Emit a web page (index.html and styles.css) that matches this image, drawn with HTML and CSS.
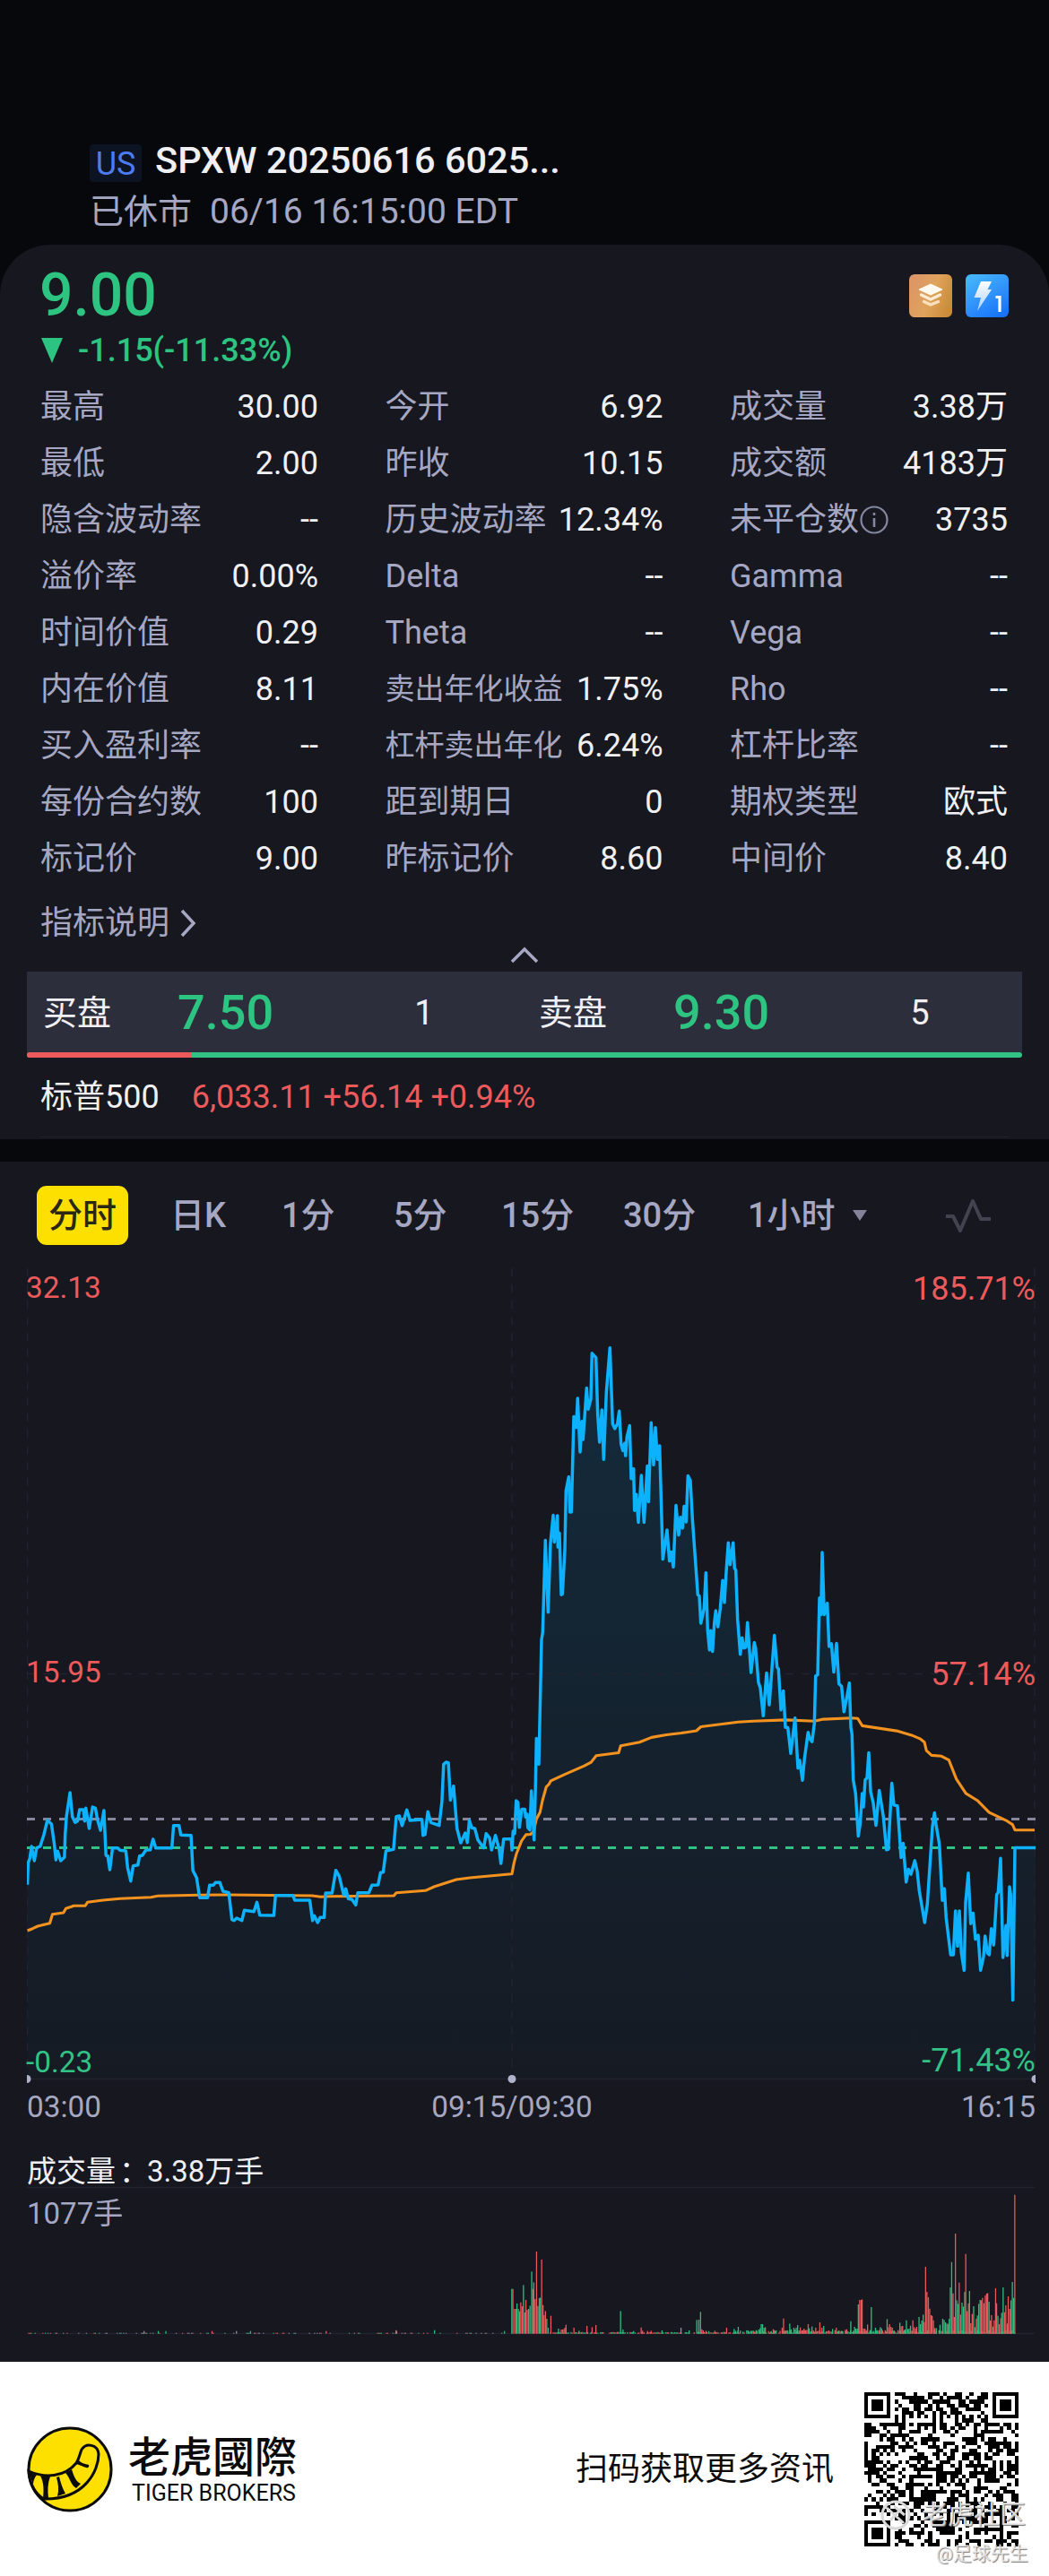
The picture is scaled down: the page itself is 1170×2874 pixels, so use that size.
FILE: index.html
```html
<!DOCTYPE html>
<html lang="zh-CN">
<head>
  <meta charset="UTF-8" />
  <title>SPXW 20250616 6025</title>
  <link rel="stylesheet" href="styles.css">
</head>
<body>
  <header class="top">
    <div class="title"><span class="market">US</span><h1>SPXW 20250616 6025...</h1></div>
    <div class="status"><span>已休市</span><span class="time">06/16 16:15:00 EDT</span></div>
  </header>

  <section class="card">
    <div class="price-row">
      <div class="price">9.00</div>
      <div class="badges">
        <svg width="48" height="48" viewBox="0 0 48 48">
          <defs><linearGradient id="gold" x1="0" y1="0.3" x2="1" y2="0.7"><stop offset="0" stop-color="#dc9668"/><stop offset="0.5" stop-color="#dfa35c"/><stop offset="1" stop-color="#c98b37"/></linearGradient></defs>
          <rect width="48" height="48" rx="6" fill="url(#gold)"/>
          <path d="M24 11 L37 17 L24 23 L11 17 Z" fill="#fffaf0" stroke="#fffaf0" stroke-width="1" stroke-linejoin="round"/>
          <path d="M13.500 23 L24 28 L34.500 23" fill="none" stroke="#fdebd2" stroke-width="3.500" stroke-linecap="round" stroke-linejoin="round"/>
          <path d="M16.500 30.500 L24 34 L32.500 30.500" fill="none" stroke="#fae0bf" stroke-width="3.500" stroke-linecap="round" stroke-linejoin="round"/>
        </svg>
        <svg width="48" height="48" viewBox="0 0 48 48">
          <defs><linearGradient id="blue" x1="0.2" y1="0" x2="0.8" y2="1"><stop offset="0" stop-color="#45b5fa"/><stop offset="0.55" stop-color="#2f90fb"/><stop offset="1" stop-color="#1672fb"/></linearGradient>
          <linearGradient id="bolt" x1="0" y1="0" x2="0" y2="1"><stop offset="0" stop-color="#fff"/><stop offset="1" stop-color="#a9d0ff"/></linearGradient></defs>
          <rect width="48" height="48" rx="6" fill="url(#blue)"/>
          <path d="M17 8 H29 L24.500 17 H29 L13 41 L17 26 H9.500 Z" fill="url(#bolt)"/>
          <path d="M33.500 25.500 H38 V42" fill="none" stroke="#fff" stroke-width="3.200"/>
        </svg>
      </div>
    </div>
    <div class="change"><i class="down"></i>-1.15(-11.33%)</div>

    <div class="stats">
      <div><span>最高</span><b>30.00</b></div><div><span>今开</span><b>6.92</b></div><div><span>成交量</span><b>3.38万</b></div>
      <div><span>最低</span><b>2.00</b></div><div><span>昨收</span><b>10.15</b></div><div><span>成交额</span><b>4183万</b></div>
      <div><span>隐含波动率</span><b>--</b></div><div><span>历史波动率</span><b>12.34%</b></div>
      <div><span class="with-info">未平仓数<svg width="34" height="34" viewBox="0 0 34 34"><circle cx="17" cy="17" r="14.500" fill="none" stroke="#8586a0" stroke-width="2.200"/><path d="M17 15 V25 M17 9 V12" stroke="#8586a0" stroke-width="2.600"/></svg></span><b>3735</b></div>
      <div><span>溢价率</span><b>0.00%</b></div><div><span>Delta</span><b>--</b></div><div><span>Gamma</span><b>--</b></div>
      <div><span>时间价值</span><b>0.29</b></div><div><span>Theta</span><b>--</b></div><div><span>Vega</span><b>--</b></div>
      <div><span>内在价值</span><b>8.11</b></div><div><span class="small">卖出年化收益</span><b>1.75%</b></div><div><span>Rho</span><b>--</b></div>
      <div><span>买入盈利率</span><b>--</b></div><div><span class="small">杠杆卖出年化</span><b>6.24%</b></div><div><span>杠杆比率</span><b>--</b></div>
      <div><span>每份合约数</span><b>100</b></div><div><span>距到期日</span><b>0</b></div><div><span>期权类型</span><b>欧式</b></div>
      <div><span>标记价</span><b>9.00</b></div><div><span>昨标记价</span><b>8.60</b></div><div><span>中间价</span><b>8.40</b></div>
    </div>

    <div class="explain">指标说明<svg width="20" height="34" viewBox="0 0 20 34"><path d="M3 3 L16 17 L3 31" fill="none" stroke="#a6a7c2" stroke-width="3.500"/></svg></div>
    <div class="fold"><svg width="34" height="20" viewBox="0 0 34 20"><path d="M3 17 L17 3 L31 17" fill="none" stroke="#a6a7c2" stroke-width="3.500"/></svg></div>

    <div class="book">
      <div class="side"><span>买盘</span><strong>7.50</strong><em>1</em></div>
      <div class="side"><span>卖盘</span><strong>9.30</strong><em>5</em></div>
    </div>
    <div class="ratio"><i></i></div>
    <div class="index"><span>标普500</span><span class="up">6,033.11 +56.14 +0.94%</span></div>
  </section>

  <section class="chart-card">
    <nav class="tabs">
      <a class="active">分时</a><a>日K</a><a>1分</a><a>5分</a><a>15分</a><a>30分</a><a>1小时</a>
      <svg width="16" height="12" viewBox="0 0 16 12"><path d="M0 0 H16 L8 12 Z" fill="#83849c"/></svg>
      <svg width="54" height="40" viewBox="0 0 54 40"><path d="M2 21 H10 L18 37 L32 4 L41 24 H52" fill="none" stroke="#42434f" stroke-width="4" stroke-linejoin="round"/></svg>
    </nav>
    <svg class="chart" width="1170" height="1223" viewBox="0 1412 1170 1223">
      <defs>
        <linearGradient id="area" gradientUnits="userSpaceOnUse" x1="0" y1="1500" x2="0" y2="2320">
          <stop offset="0" stop-color="#00b4ff" stop-opacity="0.13"/>
          <stop offset="1" stop-color="#00b4ff" stop-opacity="0.02"/>
        </linearGradient>
        <clipPath id="plot"><rect x="30" y="1412" width="1125" height="1223"/></clipPath>
      </defs>
      <g clip-path="url(#plot)">
        <path id="fill" fill="url(#area)"/>
        <path class="grid dashed" d="M30.500 1415 V2319 M571 1415 V2319 M1154 1415 V2319 M30 1867.500 H1154"/>
        <path class="grid" d="M30 2319.500 H1154 M30 2440.500 H1154 M30 2603.500 H1154"/>
        <path class="ref prev" d="M30 2029.500 H1155"/>
        <path class="ref last" d="M30 2061.500 H1155"/>
        <path id="avg" class="line avg"/>
        <path id="price" class="line price-line"/>
        <g fill="#b0b1cb"><circle cx="30" cy="2319.500" r="4.500"/><circle cx="571" cy="2319.500" r="4.500"/><circle cx="1155" cy="2319.500" r="4.500"/></g>
        <g id="volume"></g>
      </g>
      <g class="labels">
        <text class="red" x="29" y="1448">32.13</text>
        <text class="red" x="29" y="1877">15.95</text>
        <text class="green" x="29" y="2312">-0.23</text>
        <g text-anchor="end">
          <text class="red pct" x="1155" y="1450">185.71%</text>
          <text class="red pct" x="1155" y="1880">57.14%</text>
          <text class="green pct" x="1155" y="2311">-71.43%</text>
          <text x="1155" y="2362">16:15</text>
        </g>
        <text x="30" y="2362">03:00</text>
        <text x="571" y="2362" text-anchor="middle">09:15/09:30</text>
        <text class="white vol" x="30" y="2434">成交量<tspan dx="4">：</tspan><tspan dx="-2">3.38万手</tspan></text>
        <text class="vol" x="30" y="2481">1077手</text>
      </g>
    </svg>
  </section>

  <footer>
    <svg class="logo" width="96" height="96" viewBox="0 0 96 96">
      <circle cx="48" cy="48" r="46" fill="#fee000" stroke="#0b0b0b" stroke-width="3"/>
      <path d="M2 50 C20 58 42 57 55 41 C59 35 59 30 61 26 C66 18 79 20 80 31 C80 49 65 82 19 81 C10 76 3 65 2 50 Z" fill="#fee000" stroke="#0b0b0b" stroke-width="3"/>
      <path d="M2 50 L11 54 C9 57 7 60 7 66 Z M15 55 L26 56 C23 64 23 72 24 80 L18 81 C19 71 19 63 15 55 Z M33 57 L36 56 C38 64 40 70 43 75 L34 78 C36 71 35 64 33 57 Z M43 52 L50 48 C52 55 55 62 60 64 L55 69 C49 66 48 57 43 52 Z M53 42 L57 37 C60 41 65 42 69 43 C70 45 68 47 66 46 C62 45 58 42 53 42 Z" fill="#0b0b0b"/>
    </svg>
    <div class="brand"><div class="cn">老虎國際</div><div class="en">TIGER BROKERS</div></div>
    <div class="scan">扫码获取更多资讯</div>
    <div class="qr-box">
      <svg id="qr" width="172" height="172" viewBox="0 0 41 41" shape-rendering="crispEdges"></svg>
      <div class="mark"><svg width="36" height="36" viewBox="0 0 36 36"><g fill="none" stroke="#d9d9d9" stroke-width="3"><circle cx="18" cy="18" r="15"/><path d="M8 10 L27 27 M12 24 L25 10 M16 8 L28 18"/></g></svg>老虎社区</div>
      <div class="mark user">@足球先生</div>
    </div>
  </footer>

  <script>
    // каждый отрезок: начало координат, масштаб и точки
    const parts = [
      { x: 0, y: 1880, sx: 2.6133, sy: 3,
        price: '80,668 82,595 87,580 92,540 100,588 107,545 117,540 128,500 138,453 150,465 158,530 163,585 168,556 177,588 188,576 190,500 194,438 204,360 211,440 219,460 226,455 232,417 243,417 247,455 250,412 260,480 270,408 278,412 284,450 293,486 303,420 309,570 314,572 320,618 328,545 343,545 350,553 367,555 372,610 381,656 388,605 402,602 407,572 415,570 425,553 438,551 446,516 454,545 501,545 506,470 522,470 527,502 557,503 562,620 573,645 582,712 605,712 611,670 622,670 628,661 641,661 650,690 667,695 676,785 682,788 690,780 705,788 712,754 740,758 749,727 757,770 798,771 803,704 854,704 859,720 903,720 911,788 916,772 926,795 933,778 945,778 949,696 968,696 979,620 989,640 1002,703 1008,682 1015,715 1026,718 1037,736 1043,695 1075,695 1084,670 1102,669 1109,628 1117,626 1125,555 1147,550 1155,440 1164,438 1172,470 1186,418 1195,453 1230,450 1233,503 1239,500 1247,424 1256,460 1280,470 1288,390 1293,265 1300,258 1307,260 1313,385 1322,338 1332,480 1343,528 1356,495 1362,527 1368,453 1375,478 1384,480 1393,518 1410,545 1417,497 1427,512 1433,552 1444,503 1455,550 1460,597 1468,515 1490,515',
        avg: '80,822 95,815 110,807 145,797 153,767 185,762 192,748 208,742 215,739 248,739 255,727 300,720 350,715 440,710 460,706 580,703 660,702 910,705 935,709 960,707 1100,706 1148,705 1155,695 1240,688 1265,675 1330,651 1370,645 1490,632' },
      { x: 540, y: 1460, sx: 3, sy: 2.45,
        price: '93,1480 97,1428 102,1435 107,1345 113,1350 118,1418 126,1368 136,1368 139,1390 144,1382 146,1418 153,1425 158,1318 167,1452 172,1300 175,1175 183,1245 192,905 196,885 205,633 214,830 222,640 231,565 235,638 245,566 247,652 252,614 258,782 262,780 270,660 274,498 283,460 287,556 292,556 300,295 308,325 313,245 321,392 327,308 331,358 343,217 348,275 357,247 361,122 374,134 380,290 386,365 394,277 400,412 409,228 421,107 430,315 437,328 446,315 452,280 458,370 464,388 470,368 473,402 478,350 487,320 492,465 500,438 503,552 509,508 516,584 526,456 535,584 546,430 550,528 559,312 567,427 573,325 580,412 587,375 598,685 612,605 620,690 626,665 633,706 642,538 651,619 657,570 664,600 669,540 676,583 682,457 690,470 697,575 715,782 720,786 725,860 736,820 742,722 748,880 754,933 758,880 764,937 770,860 775,826 782,870 790,820 798,743 804,803 810,720 817,640 823,700 833,640 838,710 842,715 848,850 857,945 863,900 869,928 876,925 881,858 893,995',
        avg: '93,1545 100,1515 108,1490 125,1455 140,1438 155,1437 165,1430 175,1395 187,1377 195,1345 208,1307 217,1300 223,1291 270,1273 335,1250 358,1240 375,1222 450,1214 457,1195 520,1185 560,1172 610,1165 660,1160 710,1154 725,1143 850,1130' },
      { x: 840, y: 1680, sx: 3, sy: 2.306,
        price: '4,352 8,365 18,455 24,468 34,540 45,430 54,512 71,333 80,415 85,420 93,525 101,476 108,570 116,570 126,637 140,546 150,675 156,655 165,706 172,650 184,583 190,600 197,607 205,560 209,438 216,435 222,237 227,280 231,120 238,280 248,251 254,362 262,355 270,428 279,354 287,458 296,465 304,530 314,490 322,456 327,570 331,588 335,705 343,740 352,850 358,820 365,740 369,775 375,705 381,700 387,635 393,735 402,765 411,822 422,732 436,800 446,885 452,884 464,714 471,770 483,772 495,905 502,868 512,968 520,935 528,948 541,913 549,940 556,990 574,1072 583,1025 592,920 600,825 607,790 612,820 623,870 633,1015 640,985 646,1060 661,1155 670,1155 677,1042 684,1133 690,1042 697,1150 706,1195 711,1020 720,945 728,1075 736,1048 744,1115 753,1105 761,1195 771,1160 776,1107 784,1150 790,1155 797,1088 805,1130 815,1000 820,995 828,907 836,1162 846,1080 850,1157 858,980 862,1000 869,1272 876,880 945,880',
        avg: '0,554 110,551 205,554 235,549 330,546 350,547 365,566 480,579 530,590 560,600 573,608 580,630 597,642 630,644 655,654 680,703 712,740 750,758 790,789 850,811 868,820 876,834 942,834' }
    ];

    function line(key) {
      const pts = parts.flatMap(p => p[key].split(' ').map(s => {
        const [x, y] = s.split(',').map(Number);
        return (p.x + x / p.sx).toFixed(1) + ' ' + (p.y + y / p.sy).toFixed(1);
      }));
      return 'M' + pts.join(' L');
    }
    const priceLine = line('price');
    document.getElementById('price').setAttribute('d', priceLine);
    document.getElementById('avg').setAttribute('d', line('avg'));
    document.getElementById('fill').setAttribute('d', priceLine + ' L1155 2319 L30.6 2319 Z');

    let seed = 7;
    const rnd = () => (seed = (seed * 16807) % 2147483647) / 2147483647;

    const bars = '28g150 31r150 36r83 40r83 43g101 47g83 51g75 54r105 58r92 62g163 66g71 69r113 73r80 77g83 81g94 86g208 89r150 92g172 96r116 100r275 104g93 108r119 111g121 115r248 119r96 122r62 126r76 130g50 134g20 142r60 164g17 172r14 176r14 180r16 183r20 186r30 209r20 224g10 247r26 262r22 273r29 345g76 352g14 383g9 405r21 409r10 424r9 434r10 466g11 521w20 545g11 567g46 573g47 578g73 582r15 586r11 594r10 602g9 620r10 654r20 676g16 680g10 688g23 718g8 733r8 740g12 748g14 752g19 755g32 759g32 763g20 767r22 784g9 790r15 793r12 816r20 820r51 826r10 838g34 842g15 850g20 854g14 857g20 861g29 865g11 869r21 876r12 880r17 884r12 888r13 892r32 895g18 903g24 907r11 914r20 918r8 926r38 932r20 937g26 963g16 970r12 974r20 981g10 990g10 1000r13 1004r15 1016g42 1023g10 1027g23 1031g17 1035g17 1038g98 1042r113 1046r113 1049r115 1053r17 1057r17 1061r12 1065r31 1072g12 1076g89 1088g20 1092g12 1099r12 1102g22 1106g18 1122g49 1126r22 1129r32 1133r23 1137r20 1141g10 1159g37 1163r25 1167r26 1170g10 1174g14 1178g45 1182g16 1186g17 1190g27 1194r10 1197r45 1201r22 1205r17 1208r23 1215g56 1219g32 1223g44 1227g64 1230r39 1234r224 1238r140 1242r122 1246r84 1250r62 1253r60 1257r45 1261r19 1265g19 1276g30 1284g50 1288g46 1292g38 1296r34 1299g33 1303g50 1306g155 1310g240 1314r135 1318r56 1321r335 1325g112 1329g100 1332r171 1336r64 1340g104 1344g91 1348g140 1351r267 1355r76 1359r101 1362g143 1366r35 1370r66 1374g92 1378g22 1382r50 1385g61 1389g100 1393g113 1396r112 1400r120 1404r102 1408r128 1412r134 1415r136 1419g107 1423r44 1426r62 1430g24 1434r45 1438r152 1441r102 1445g60 1449r32 1453r52 1456g70 1460g155 1464r72 1468r95 1472r34 1475r125 1479r83 1483g112 1487g173 1491g120 1494r465';
    const colors = { g: '#2fbd7f', r: '#e8595b', w: '#8f90a5' };
    let rects = '';
    const bar = (x, h, c) => { rects += `<rect x="${x.toFixed(1)}" y="${(2603.7 - h).toFixed(1)}" width="1.3" height="${h.toFixed(1)}" fill="${colors[c]}"/>`; };
    for (let x = 30; x < 570; x += 1.43) {
      if (rnd() > 0.72) bar(x, rnd() > 0.93 ? 3 : 1, 'rgw'[Math.floor(rnd() * 3)]);
    }
    for (let x = 612; x < 1132; x += 1.43) {
      if (rnd() > 0.15) bar(x, x < 820 ? 1 + rnd() : 1 + rnd() * 3, rnd() > 0.5 ? 'g' : 'r');
    }
    bars.split(' ').forEach(s => {
      const m = s.match(/(\d+)(\w)(\d+)/);
      bar(559.5 + m[1] / 2.6133, m[3] / 3, m[2]);
    });
    bar(441, 4, 'r');
    bar(484, 4, 'g');
    document.getElementById('volume').innerHTML = rects;

    // QR 41x41
    let cells = '';
    const finder = (x, y) => `<path fill="#fff" d="M${x - 1} ${y - 1}h9v9h-9z"/><path fill-rule="evenodd" d="M${x} ${y}h7v7h-7z M${x + 1} ${y + 1}v5h5v-5z M${x + 2} ${y + 2}h3v3h-3z"/>`;
    for (let y = 0; y < 41; y++) {
      for (let x = 0; x < 41; x++) {
        const on = (x === 6 || y === 6) ? (x + y) % 2 === 0 : rnd() > 0.5;
        if (on) cells += `M${x} ${y}h1v1h-1z`;
      }
    }
    document.getElementById('qr').innerHTML = `<path d="${cells}"/>` + finder(0, 0) + finder(34, 0) + finder(0, 34)
      + '<path fill="#fff" d="M33 33h3v3h-3z"/><path fill-rule="evenodd" d="M32 32h5v5h-5z M33 33v3h3v-3z M34 34h1v1h-1z"/>';
  </script>
</body>
</html>
```
FILE: styles.css
```css
* {
  box-sizing: border-box;
}

body {
  margin: 0;
  width: 1170px;
  background: #07080b;
  color: #f0f0f4;
  font-family: Roboto, "Noto Sans CJK SC", sans-serif;
  font-size: 36px;
  line-height: 42px;
}

.top {
  height: 273px;
  padding: 153px 0 0 100px;
}

.title {
  display: flex;
  align-items: center;
  height: 52px;
}

.market {
  width: 58px;
  height: 42px;
  margin: 6px 15px 0 0;
  border-radius: 4px;
  background: #0c1322;
  color: #4d7cf0;
  font-size: 36px;
  line-height: 44px;
  text-align: center;
}

h1 {
  margin: 0;
  font-size: 41.5px;
  font-weight: 500;
  line-height: 52px;
}

.status {
  display: flex;
  gap: 20px;
  margin-top: 5px;
  color: #a6a7c2;
  font-size: 38px;
  line-height: 52px;
}

.status .time {
  font-size: 39px;
}

.card {
  height: 998px;
  padding: 26px 0 0;
  border-radius: 56px 56px 0 0;
  background: #16171f;
}

.price-row {
  display: flex;
  justify-content: space-between;
  height: 62px;
  padding: 0 45px 0 44px;
}

.price {
  color: #2dc481;
  font-size: 66px;
  font-weight: 500;
  line-height: 62px;
}

.badges {
  display: flex;
  gap: 15px;
  padding-top: 7px;
}

.change {
  display: flex;
  align-items: center;
  height: 60px;
  padding-left: 46px;
  color: #2dc481;
  font-size: 36px;
  font-weight: 500;
}

.down {
  margin-right: 17px;
  border: 12px solid transparent;
  border-top: 28px solid #2dc481;
  border-bottom: 0;
}

.stats {
  display: grid;
  grid-template-columns: 310px 310px 310px;
  grid-auto-rows: 63.1px;
  column-gap: 74.5px;
  padding-left: 45px;
}

.stats div {
  display: flex;
  justify-content: space-between;
  align-items: center;
  padding-top: 2px;
  white-space: nowrap;
}

.stats span {
  color: #a6a7c2;
}

.stats b {
  font-weight: 400;
}

.stats .small {
  font-size: 33px;
}

.with-info {
  display: flex;
  align-items: center;
}

.explain {
  display: flex;
  align-items: center;
  gap: 11px;
  height: 52px;
  margin-top: 15px;
  padding-left: 45px;
  color: #a6a7c2;
}

.fold {
  display: flex;
  justify-content: center;
  height: 28px;
}

.book {
  display: grid;
  grid-template-columns: 553px 557px;
  height: 90px;
  margin: 0 30px;
  background: #2d2e3c;
}

.side {
  display: grid;
  grid-template-columns: 150px 197px 156px;
  align-items: center;
  padding: 2px 0 0 18px;
  font-size: 38px;
}

.side strong {
  color: #2dc481;
  font-size: 54px;
  font-weight: 500;
}

.side em {
  font-style: normal;
  text-align: center;
}

.ratio {
  height: 6px;
  margin: 0 30px;
  border-radius: 3px;
  background: #32c285;
  overflow: hidden;
}

.ratio i {
  display: block;
  width: 184px;
  height: 6px;
  background: #ec5a5c;
}

.index {
  display: flex;
  align-items: center;
  gap: 36px;
  height: 89px;
  margin: 0 45px;
  border-bottom: 1px solid #20212a;
}

.up {
  color: #ec5a5c;
}

.chart-card {
  height: 1339px;
  margin-top: 25px;
  background: #16171f;
}

.tabs {
  display: grid;
  grid-template-columns: 149px 124px 125px 120px 136px 139px 117px 102px 54px;
  align-items: center;
  height: 116px;
  padding: 4px 0 0 41px;
  color: #a6a7c2;
  font-size: 38px;
  font-weight: 500;
}

.tabs .active {
  width: 102px;
  height: 66px;
  border-radius: 11px;
  background: #fee000;
  color: #2a2714;
  line-height: 66px;
  text-align: center;
}

.chart {
  display: block;
}

.grid {
  fill: none;
  stroke: #22232d;
  stroke-width: 1.5;
}

.dashed {
  stroke-dasharray: 9 9;
}

.ref {
  stroke-width: 2.8;
  stroke-dasharray: 9 9;
}

.prev {
  stroke: #85869c;
}

.last {
  stroke: #32c285;
}

.line {
  fill: none;
  stroke-linejoin: round;
}

.avg {
  stroke: #f3921e;
  stroke-width: 3.1;
}

.price-line {
  stroke: #0eb1fb;
  stroke-width: 3.5;
}

.labels {
  fill: #a6a7c2;
  font-size: 33.3px;
}

.labels .red {
  fill: #ec5a5c;
}

.labels .green {
  fill: #32c285;
}

.labels .white {
  fill: #f0f0f4;
}

.labels .pct {
  font-size: 36px;
}

.labels .vol {
  font-size: 33px;
}

footer {
  display: flex;
  align-items: center;
  height: 239px;
  padding: 0 34px 0 30px;
  background: #fff;
  color: #0b0b0b;
}

.brand {
  margin-left: 17px;
}

.cn {
  font-family: "Noto Sans CJK TC", sans-serif;
  font-size: 47px;
  font-weight: 500;
  line-height: 50px;
}

.en {
  margin: 5px 0 0 4px;
  font-size: 25px;
  line-height: 28px;
}

.scan {
  margin: 0 34px 0 auto;
  line-height: 40px;
}

.qr-box {
  position: relative;
  height: 172px;
}

.mark {
  position: absolute;
  top: 115px;
  left: 17px;
  display: flex;
  align-items: center;
  gap: 11px;
  color: rgba(235, 235, 235, 0.9);
  font-size: 29px;
  line-height: 44px;
  text-shadow: 1px 1px 1px #777;
  white-space: nowrap;
}

.user {
  top: 165px;
  left: 80px;
  font-size: 21px;
  line-height: 30px;
}
```
